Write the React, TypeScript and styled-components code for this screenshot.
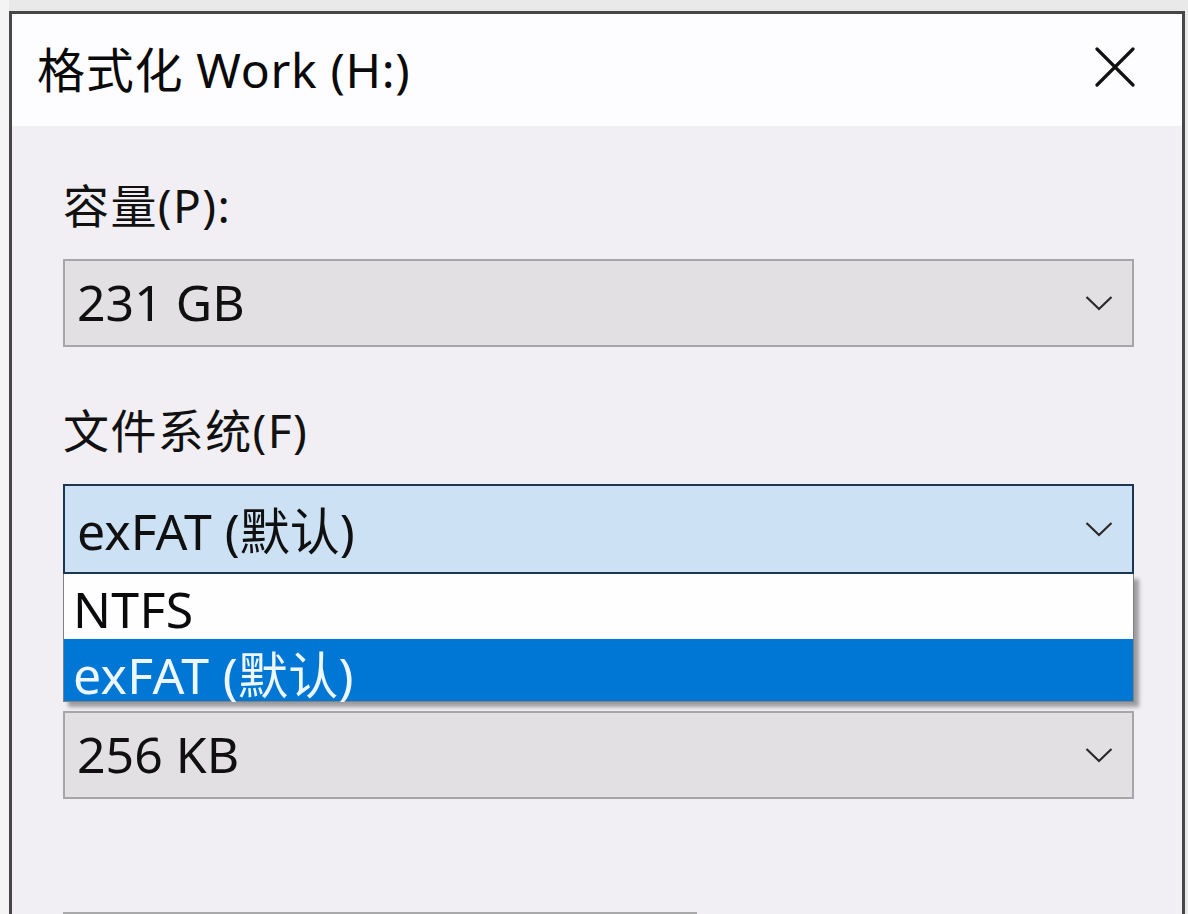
import React from "react";
import styled, { createGlobalStyle } from "styled-components";

const Global = createGlobalStyle`
  html, body { margin: 0; padding: 0; }
  body {
    background: #ececec;
    font-family: "Noto Sans", "Noto Sans CJK SC", sans-serif;
    overflow: hidden;
  }
`;

const Page = styled.div`
  width: 1188px;
  height: 914px;
  box-sizing: border-box;
  padding: 11px 3px 0 9px;
  background: linear-gradient(to right, #f4f4f4 0, #f4f4f4 9px, #e9e9ea 9px);
  display: flex;
`;

const Window = styled.div`
  flex: 1;
  border: 3px solid #474747;
  border-bottom: none;
  display: flex;
  flex-direction: column;
  background: #f1eff3;
  overflow: hidden;
`;

const TitleBar = styled.div`
  height: 112px;
  flex: none;
  background: #fdfcfe;
  display: flex;
  align-items: center;
  justify-content: space-between;
  padding: 0 47px 0 25px;
`;

const Title = styled.div`
  font-size: 48px;
  letter-spacing: 0.7px;
  color: #0a0a0a;
  margin-top: -6px;
`;

const CloseIcon = styled.svg`
  width: 40px;
  height: 40px;
  display: block;
  margin-bottom: 6px;
`;

const Body = styled.div`
  flex: 1;
  padding: 51px 48px 0 51px;
  display: flex;
  flex-direction: column;
`;

const Section = styled.div`
  display: flex;
  flex-direction: column;
  margin-bottom: 55px;
  position: relative;
`;

const Label = styled.div<{ $covered?: boolean }>`
  font-size: 46px;
  letter-spacing: 1.4px;
  line-height: 56px;
  height: 56px;
  color: #111;
  margin-bottom: 26px;
  visibility: ${(p) => (p.$covered ? "hidden" : "visible")};
`;

const Combo = styled.div<{ $focused?: boolean }>`
  height: ${(p) => (p.$focused ? "90px" : "88px")};
  box-sizing: border-box;
  border: ${(p) => (p.$focused ? "2px solid #1c3552" : "2px solid #a6a5a8")};
  background: ${(p) => (p.$focused ? "#cde1f5" : "#e2e0e3")};
  display: flex;
  align-items: center;
  justify-content: space-between;
  padding: 0 19px 0 12px;
`;

const ComboText = styled.div`
  font-size: 50px;
  color: #101010;
  margin-top: -2px;
`;

const Chevron = styled.svg`
  width: 28px;
  height: 16px;
  display: block;
`;

const DropList = styled.div`
  position: absolute;
  left: 0;
  right: 0;
  top: 172px;
  background: #fff;
  border: 1px solid #808080;
  border-top: none;
  box-shadow: 5px 5px 4px rgba(0, 0, 0, 0.35);
  z-index: 2;
`;

const Option = styled.div<{ $selected?: boolean }>`
  height: ${(p) => (p.$selected ? "62px" : "65px")};
  display: flex;
  align-items: center;
  padding: 4px 0 0 9px;
  box-sizing: border-box;
  font-size: 50px;
  letter-spacing: 0.3px;
  background: ${(p) => (p.$selected ? "#0077d5" : "#fefdff")};
  color: ${(p) => (p.$selected ? "#eef7ff" : "#0a0a0a")};
`;

const BottomBox = styled.div`
  margin-top: 58px;
  width: 630px;
  height: 60px;
  border: 2px solid #a9a8ab;
  background: #e2e0e3;
`;

const ChevronIcon = () => (
  <Chevron viewBox="0 0 28 16">
    <polyline points="1.5,2 14,14 26.5,2" fill="none" stroke="#2a2a2a" strokeWidth="2.2" />
  </Chevron>
);

export default function App() {
  return (
    <>
      <Global />
      <Page>
        <Window>
          <TitleBar>
            <Title>格式化 Work (H:)</Title>
            <CloseIcon viewBox="0 0 40 40">
              <path d="M2 2 L38 38 M38 2 L2 38" stroke="#111" strokeWidth="3.2" strokeLinecap="round" />
            </CloseIcon>
          </TitleBar>
          <Body>
            <Section>
              <Label>容量(P):</Label>
              <Combo>
                <ComboText>231 GB</ComboText>
                <ChevronIcon />
              </Combo>
            </Section>
            <Section>
              <Label>文件系统(F)</Label>
              <Combo $focused>
                <ComboText>exFAT (默认)</ComboText>
                <ChevronIcon />
              </Combo>
              <DropList>
                <Option>NTFS</Option>
                <Option $selected>exFAT (默认)</Option>
              </DropList>
            </Section>
            <Section>
              <Label $covered>分配单元大小(A):</Label>
              <Combo>
                <ComboText>256 KB</ComboText>
                <ChevronIcon />
              </Combo>
            </Section>
            <BottomBox />
          </Body>
        </Window>
      </Page>
    </>
  );
}
